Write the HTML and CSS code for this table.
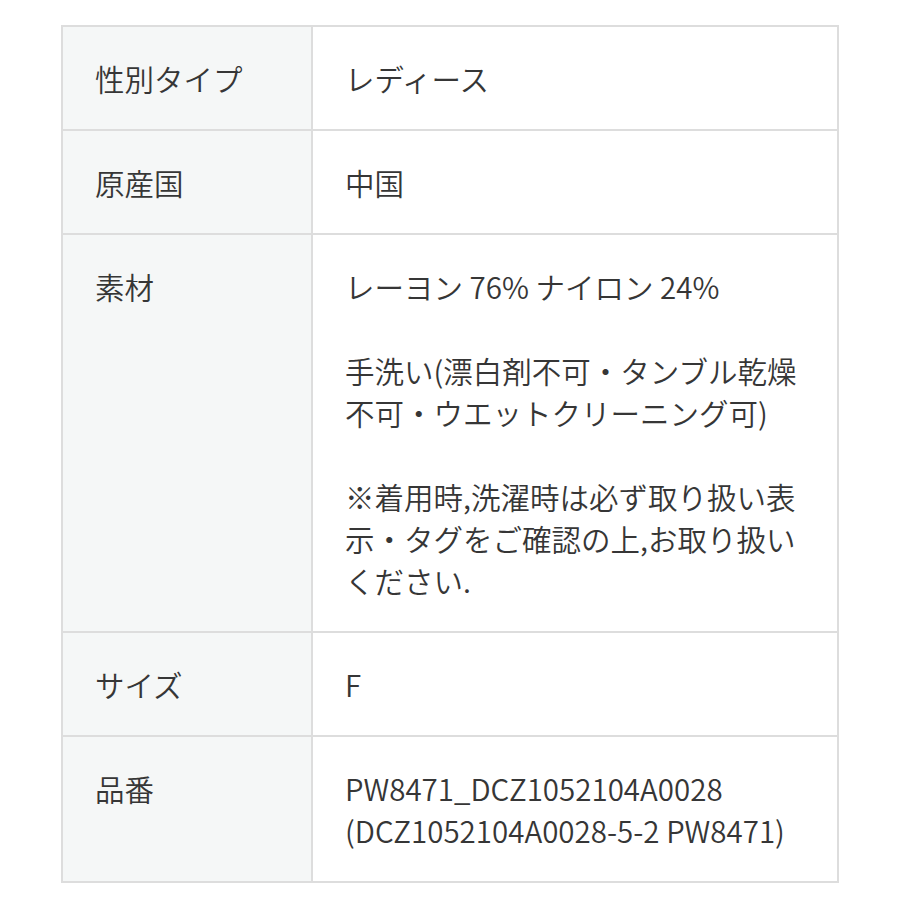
FILE: index.html
```html
<!DOCTYPE html>
<html lang="ja">
<head>
<meta charset="utf-8">
<link rel="stylesheet" href="styles.css">
</head>
<body>
<table class="spec">
  <colgroup><col class="col-label"><col class="col-value"></colgroup>
  <tr><th>性別タイプ</th><td>レディース</td></tr>
  <tr><th>原産国</th><td>中国</td></tr>
  <tr><th>素材</th><td>レーヨン 76% ナイロン 24%<br><br>手洗い(漂白剤不可・タンブル乾燥不可・ウエットクリーニング可)<br><br>※着用時,洗濯時は必ず取り扱い表示・タグをご確認の上,お取り扱いください.</td></tr>
  <tr><th>サイズ</th><td>F</td></tr>
  <tr><th>品番</th><td>PW8471_DCZ1052104A0028<br>(DCZ1052104A0028-5-2 PW8471)</td></tr>
</table>
</body>
</html>
```
FILE: styles.css
```css
html, body {
  margin: 0;
  padding: 0;
  background: #ffffff;
}
body {
  padding: 25px 0 0 61px;
  font-family: "Noto Sans CJK JP", "Noto Sans", sans-serif;
  color: #363636;
}
.spec {
  border-collapse: collapse;
  width: 778px;
  table-layout: fixed;
  font-size: 29.5px;
  line-height: 42px;
  font-weight: 350;
}
.col-label { width: 250px; }
.spec th, .spec td {
  border: 2px solid #dddddd;
  padding: 30px 30px 30px 32px;
  text-align: left;
  vertical-align: top;
  font-weight: 350;
}
.spec th {
  background: #f5f7f7;
}
.spec td {
  background: #ffffff;
}
```
